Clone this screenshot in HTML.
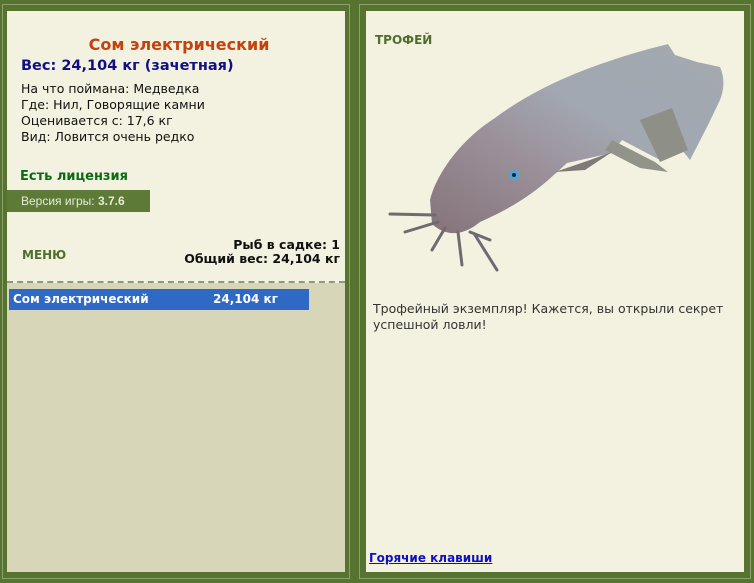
<!DOCTYPE html>
<html><head><meta charset="utf-8"><style>
body{margin:0;width:754px;height:583px;background:#56742f;position:relative;overflow:hidden;font-family:"DejaVu Sans","Liberation Sans",sans-serif;}
.p{position:absolute;box-sizing:border-box;}
.fr{border:1px solid #8ea070;}
.a{font-size:12px;color:#111;position:absolute;}
</style></head><body>
<div class="p fr" style="left:2px;top:4px;width:348px;height:575px;"></div>
<div class="p fr" style="left:359px;top:4px;width:392px;height:575px;"></div>
<div class="p" style="left:7px;top:11px;width:338px;height:561px;background:#d8d6b8;">
  <div style="position:absolute;left:0;top:0;width:338px;height:270px;background:#f3f2e1;border-bottom:2px dashed #8a9a7a;"></div>
  <div class="a" style="left:0;width:344px;text-align:center;top:24px;font-size:16px;font-weight:bold;color:#c4420d;">Сом электрический</div>
  <div class="a" style="left:14px;top:47px;font-size:14.5px;font-weight:bold;color:#101080;">Вес: 24,104 кг (зачетная)</div>
  <div class="a" style="left:14px;top:70px;line-height:16px;font-size:12.5px;">На что поймана: Медведка<br>Где: Нил, Говорящие камни<br>Оценивается с: 17,6 кг<br>Вид: Ловится очень редко</div>
  <div class="a" style="left:13px;top:158px;font-weight:bold;font-size:13px;color:#0b6b14;">Есть лицензия</div>
  <div style="position:absolute;left:0;top:179px;width:143px;height:22px;background:#5d7a37;color:#e8ead8;font-size:12px;line-height:22px;text-indent:14px;font-family:'Liberation Sans',sans-serif;">Версия игры: <b>3.7.6</b></div>
  <div class="a" style="left:15px;top:237px;font-size:12px;font-weight:900;color:#4f6d2c;">МЕНЮ</div>
  <div class="a" style="right:5px;top:227px;text-align:right;font-weight:bold;font-size:12.5px;line-height:14px;">Рыб в садке: 1<br>Общий вес: 24,104 кг</div>
  <div style="position:absolute;left:2px;top:278px;width:300px;height:21px;background:#2f69c6;color:#fff;font-weight:bold;font-size:12px;line-height:21px;"><span style="margin-left:4px">Сом электрический</span><span style="position:absolute;left:204px">24,104 кг</span></div>
</div>
<div class="p" style="left:366px;top:11px;width:378px;height:561px;background:#f3f2e1;">
  <div class="a" style="left:9px;top:22px;font-weight:900;font-size:12px;color:#4f6d2c;">ТРОФЕЙ</div>
  <svg style="position:absolute;left:0;top:0" width="378" height="280" viewBox="366 11 378 280">
    <defs><linearGradient id="g" x1="0" y1="1" x2="1" y2="0">
      <stop offset="0" stop-color="#85737a"/><stop offset="0.35" stop-color="#9b9099"/><stop offset="0.6" stop-color="#a2a8b2"/><stop offset="1" stop-color="#a3a9ae"/></linearGradient></defs>
    <path d="M430 200 C436 175 460 140 495 118 C530 92 580 66 668 44 L675 55 L697 62 L720 67 C725 78 724 90 720 100 L708 125 L690 160 L682 150 L660 160 L622 140 L612 153 L567 163 C548 180 530 200 480 222 C462 237 445 236 432 224 Z" fill="url(#g)"/>
    <path d="M640 120 L672 108 L688 150 L660 162 Z" fill="#8e8f86"/>
    <path d="M612 140 L655 162 L668 172 L640 168 L605 150 Z" fill="#92948c"/>
    <path d="M555 172 L590 160 L612 152 L585 170 Z" fill="#7f7a78"/>
    <circle cx="514" cy="175" r="5" fill="#4aa8d8"/><circle cx="514" cy="175" r="2" fill="#123"/>
    <g stroke="#6f6a72" stroke-width="3" fill="none" stroke-linecap="round">
      <path d="M435 215 L390 214"/><path d="M438 222 L405 232"/><path d="M445 228 L432 250"/>
      <path d="M458 232 L462 265"/><path d="M470 232 L490 240"/><path d="M475 235 L497 270"/>
    </g>
  </svg>
  <div class="a" style="left:7px;top:290px;font-size:12.5px;line-height:16px;color:#333;">Трофейный экземпляр! Кажется, вы открыли секрет<br>успешной ловли!</div>
  <div class="a" style="left:3px;top:540px;font-weight:bold;font-size:12px;color:#1010c0;text-decoration:underline;">Горячие клавиши</div>
</div>
</body></html>
